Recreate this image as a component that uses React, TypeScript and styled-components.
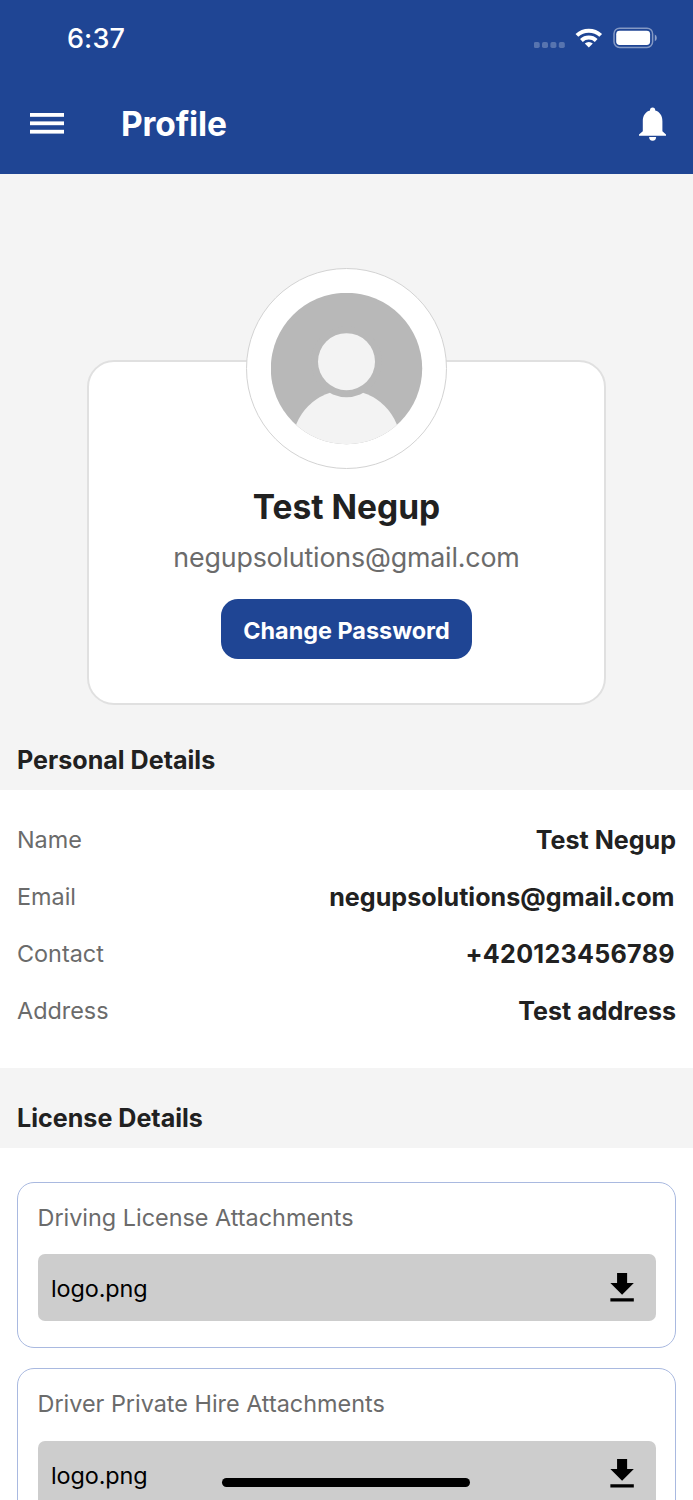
import React from "react";
import styled, { createGlobalStyle } from "styled-components";

const GlobalStyle = createGlobalStyle`
  * { box-sizing: border-box; }
  html, body { margin: 0; padding: 0; background: #fff; }
  body { font-family: Inter, "Liberation Sans", sans-serif; }
  p, h1, h2, h3 { margin: 0; font-weight: inherit; }
`;

type TypeProps = { $size: number; $weight?: number; $track?: number; $color?: string; $line?: number };

const Label = styled.span<TypeProps>`
  display: block;
  white-space: nowrap;
  font-size: ${(p) => p.$size}px;
  font-weight: ${(p) => p.$weight ?? 400};
  letter-spacing: ${(p) => p.$track ?? 0}px;
  color: ${(p) => p.$color ?? "#212121"};
  line-height: ${(p) => p.$line ?? 40}px;
`;

const DetailValue = styled(Label)<{ $inset: number }>`
  padding-right: ${(p) => p.$inset}px;
`;

const Screen = styled.main`
  width: 693px;
  height: 1500px;
  overflow: hidden;
  position: relative;
  background: #fff;
`;

const Header = styled.header`
  height: 174px;
  background: #1f4594;
`;

const StatusBar = styled.div`
  height: 76px;
  padding: 0 35px 0 67px;
  display: flex;
  align-items: center;
  justify-content: space-between;
`;

const Clock = styled.div`
  padding-top: 2px;
`;

const AppBar = styled.div`
  height: 96px;
  padding: 0 27px 0 30px;
  display: flex;
  align-items: center;
`;

const Title = styled.h1`
  flex: 1;
  margin-left: 57px;
`;

const Hero = styled.section`
  height: 555px;
  padding-top: 94px;
  background: #f4f4f4;
  display: flex;
  flex-direction: column;
  align-items: center;
`;

const AvatarRing = styled.div`
  width: 201px;
  height: 201px;
  margin-bottom: -109px;
  z-index: 1;
  border: 1px solid #d3d3d3;
  border-radius: 50%;
  background: #fff;
  display: flex;
  align-items: center;
  justify-content: center;
`;

const Card = styled.div`
  width: 519px;
  height: 345px;
  padding-top: 123px;
  border: 2px solid #e0e0e0;
  border-radius: 27px;
  background: #fff;
  display: flex;
  flex-direction: column;
  align-items: center;
`;

const PrimaryButton = styled.button`
  width: 251px;
  height: 60px;
  margin-top: 13px;
  padding: 4px 0 0;
  border: 0;
  border-radius: 17px;
  background: #1f4594;
  font-family: inherit;
  display: flex;
  align-items: center;
  justify-content: center;
`;

const SectionTitle = styled.div<{ $height: number; $pad: number }>`
  height: ${(p) => p.$height}px;
  padding: ${(p) => p.$pad}px 17px 0;
  background: #f4f4f4;
`;

const Details = styled.section`
  height: 278px;
  padding: 21px 17px 0;
`;

const DetailRow = styled.div`
  height: 57px;
  display: flex;
  align-items: center;
  justify-content: space-between;
`;

const Attachments = styled.section`
  padding: 34px 17px 0;
  display: flex;
  flex-direction: column;
  gap: 20px;
`;

const AttachmentCard = styled.article`
  height: 166.4px;
  padding: 15px 19.5px 0;
  border: 1px solid #a9b9e0;
  border-radius: 17px;
`;

const FileRow = styled.div`
  height: 67px;
  margin-top: 16.4px;
  padding: 0 13.5px;
  border-radius: 7px;
  background: #cdcdcd;
  display: flex;
  align-items: center;
  justify-content: space-between;
`;

const FileName = styled.div`
  padding-top: 3px;
`;

const HomeIndicator = styled.div`
  position: absolute;
  left: 222px;
  bottom: 13px;
  width: 248px;
  height: 9px;
  border-radius: 5px;
  background: #000;
`;

const StatusIcons = () => (
  <svg width="124" height="28" viewBox="534 24 124 28" fill="#fff">
    <g opacity="0.25">
      <rect x="533.7" y="42" width="6" height="6" rx="1.8" />
      <rect x="542" y="42" width="6" height="6" rx="1.8" />
      <rect x="550.4" y="42" width="6" height="6" rx="1.8" />
      <rect x="558.8" y="42" width="6" height="6" rx="1.8" />
    </g>
    <path d="M588.8 47.6l-4-4a5.8 5.8 0 0 1 8 0z" />
    <g fill="none" stroke="#fff" strokeWidth="4">
      <path d="M581.4 40.5a10.8 10.8 0 0 1 14.8 0" />
      <path d="M576.9 35.4a17.4 17.4 0 0 1 23.8 0" />
    </g>
    <rect x="614" y="28.2" width="38.6" height="19.2" rx="5.6" fill="none" stroke="#fff" strokeOpacity="0.45" strokeWidth="1.5" />
    <rect x="616.2" y="30.8" width="33.9" height="14.2" rx="3.4" />
    <path d="M654.8 34.6q2 .8 2 3.3t-2 3.3z" opacity="0.5" />
  </svg>
);

const MenuIcon = () => (
  <svg width="34" height="22" viewBox="0 0 34 22" fill="#fff">
    <rect y="0" width="34" height="3.8" />
    <rect y="8.4" width="34" height="3.8" />
    <rect y="16.8" width="34" height="3.8" />
  </svg>
);

const BellIcon = () => (
  <svg width="28" height="34" viewBox="638 107.2 28 34" fill="#fff">
    <path d="M639 135.9v-1.1l3.8-3.4v-10c0-5.6 2.8-9.4 7.2-10.6v-.4a2.6 2.6 0 0 1 5.2 0v.4c4.4 1.2 7.2 5 7.2 10.6v10l3.8 3.4v1.1z" />
    <path d="M649.1 137.2h7a3.5 3.7 0 0 1-7 0z" />
  </svg>
);

const DownloadIcon = () => (
  <svg width="40.2" height="40.2" viewBox="0 0 24 24" fill="#000">
    <path d="M19 9h-4V3H9v6H5l7 7 7-7zM5 18v2h14v-2H5z" />
  </svg>
);

const Avatar = () => (
  <svg width="152" height="152" viewBox="0 0 152 152">
    <defs>
      <clipPath id="face">
        <circle cx="75.5" cy="75.5" r="75.7" />
      </clipPath>
    </defs>
    <g clipPath="url(#face)">
      <rect width="152" height="152" fill="#b8b8b8" />
      <circle cx="75.5" cy="151.2" r="54" fill="#f3f3f3" />
      <circle cx="75.5" cy="68.7" r="35.5" fill="#b8b8b8" />
      <circle cx="75.5" cy="68.7" r="28.5" fill="#f3f3f3" />
    </g>
  </svg>
);

const details = [
  { label: "Name", value: "Test Negup", inset: 0, track: 0 },
  { label: "Email", value: "negupsolutions@gmail.com", inset: 1.5, track: 0.03 },
  { label: "Contact", value: "+420123456789", inset: 1.2, track: 0.27 },
  { label: "Address", value: "Test address", inset: 0, track: 0 },
];

const attachments = ["Driving License Attachments", "Driver Private Hire Attachments"];

export default function App() {
  return (
    <>
      <GlobalStyle />
      <Screen>
        <Header>
          <StatusBar>
            <Clock>
              <Label $size={27} $weight={500} $track={0.1} $color="#fff">6:37</Label>
            </Clock>
            <StatusIcons />
          </StatusBar>
          <AppBar>
            <MenuIcon />
            <Title>
              <Label as="span" $size={33.5} $weight={700} $track={-0.15} $color="#fff">Profile</Label>
            </Title>
            <BellIcon />
          </AppBar>
        </Header>

        <Hero>
          <AvatarRing>
            <Avatar />
          </AvatarRing>
          <Card>
            <Label $size={33.5} $weight={700} $line={44}>Test Negup</Label>
            <Label $size={26.8} $weight={400} $track={-0.17} $color="#6b6b6b" $line={57}>negupsolutions@gmail.com</Label>
            <PrimaryButton>
              <Label $size={23.4} $weight={700} $color="#fff">Change Password</Label>
            </PrimaryButton>
          </Card>
        </Hero>

        <SectionTitle as="h2" $height={61} $pad={11}>
          <Label $size={25.1} $weight={700}>Personal Details</Label>
        </SectionTitle>
        <Details>
          {details.map((d) => (
            <DetailRow key={d.label}>
              <Label $size={23.4} $weight={400} $color="#6b6b6b">{d.label}</Label>
              <DetailValue $size={25.1} $weight={700} $inset={d.inset} $track={d.track}>{d.value}</DetailValue>
            </DetailRow>
          ))}
        </Details>

        <SectionTitle as="h2" $height={80} $pad={30}>
          <Label $size={25.1} $weight={700}>License Details</Label>
        </SectionTitle>
        <Attachments>
          {attachments.map((name) => (
            <AttachmentCard key={name}>
              <Label $size={23.4} $weight={400} $color="#6b6b6b">{name}</Label>
              <FileRow>
                <FileName>
                  <Label $size={23.4} $track={-0.1} $color="#000">logo.png</Label>
                </FileName>
                <DownloadIcon />
              </FileRow>
            </AttachmentCard>
          ))}
        </Attachments>
        <HomeIndicator />
      </Screen>
    </>
  );
}
